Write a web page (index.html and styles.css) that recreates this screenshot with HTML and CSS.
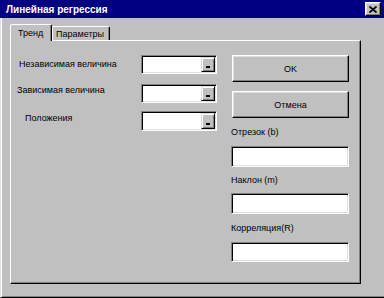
FILE: index.html
```html
<!DOCTYPE html>
<html lang="ru">
<head>
<meta charset="utf-8">
<link rel="stylesheet" href="styles.css">
</head>
<body>
<div class="window">
  <div class="titlebar">
    <span class="title">Линейная регрессия</span>
    <div class="close"><svg width="8" height="7" viewBox="0 0 8 7"><path d="M0.5 0.5 L7.5 6.5 M7.5 0.5 L0.5 6.5" stroke="#000" stroke-width="1.7" fill="none"/></svg></div>
  </div>
  <div class="client">
    <div class="tabs">
      <div class="tab active">Тренд</div>
      <div class="tab">Параметры</div>
    </div>
    <div class="panel">
      <div class="left">
        <div class="row r1"><span class="lbl">Независимая величина</span><div class="combo"><span class="dd"><i></i></span></div></div>
        <div class="row r2"><span class="lbl">Зависимая величина</span><div class="combo"><span class="dd"><i></i></span></div></div>
        <div class="row r3"><span class="lbl">Положения</span><div class="combo"><span class="dd"><i></i></span></div></div>
      </div>
      <div class="right">
        <div class="btn ok">OK</div>
        <div class="btn cancel">Отмена</div>
        <div class="flbl l1">Отрезок (b)</div>
        <div class="field"></div>
        <div class="flbl l2">Наклон (m)</div>
        <div class="field"></div>
        <div class="flbl l3">Корреляция(R)</div>
        <div class="field f3"></div>
      </div>
    </div>
  </div>
</div>
</body>
</html>
```
FILE: styles.css
```css
* { box-sizing: border-box; }
html, body { margin: 0; padding: 0; background: #c0c0c0; }
body { width: 384px; height: 298px; overflow: hidden; font-family: "Liberation Sans", Arial, sans-serif; font-size: 9px; color: #000; }

.window { width: 384px; height: 298px; display: flex; flex-direction: column; background: #c0c0c0; }

.titlebar { height: 18px; background: #000080; display: flex; align-items: center; justify-content: space-between; padding: 0 3px 0 6px; flex: none; }
.title { color: #fff; font-weight: bold; font-size: 10px; }
.close { width: 16px; height: 14px; background: #c0c0c0; border: 1px solid; border-color: #fff #000 #000 #fff; box-shadow: inset -1px -1px #808080, inset 1px 1px #dfdfdf; display: flex; align-items: center; justify-content: center; }
.close svg { display: block; }

.client { flex: 1; border-left: 1px solid #dfdfdf; box-shadow: inset 1px 0 #fff, inset 0 -1px #808080; border-bottom: 1px solid #000; padding: 6px 0 0 9px; display: flex; flex-direction: column; }

.tabs { display: flex; align-items: flex-end; height: 16px; }
.tab { background: #c0c0c0; border: 1px solid; border-bottom: none; border-color: #fff #000 transparent #fff; box-shadow: inset -1px 0 #808080; border-radius: 2px 2px 0 0; height: 14px; padding: 2px 0 0 3px; line-height: 11px; white-space: nowrap; overflow: hidden; }
.tab.active { position: relative; z-index: 1; height: 17px; margin-bottom: -1px; width: 42px; padding: 3px 0 0 7px; }
.tab:not(.active) { width: 58px; }

.panel { width: 351px; height: 244px; border: 1px solid; border-color: #fff #000 #000 #fff; box-shadow: inset -1px -1px #808080; display: grid; grid-template-columns: 206px 118px; column-gap: 14px; padding-top: 14px; align-items: start; }

.left { display: flex; flex-direction: column; }
.row { display: flex; justify-content: space-between; align-items: flex-start; height: 19px; }
.row.r2 { margin-top: 10px; }
.row.r3 { margin-top: 8px; height: 20px; }
.lbl { line-height: 12px; }
.r1 .lbl { padding: 3px 0 0 8px; }
.r2 .lbl { padding: 0 0 0 6px; }
.r3 .lbl { padding: 1px 0 0 14px; }

.combo { width: 76px; height: 100%; background: #fff; border: 1px solid; border-color: #808080 #fff #fff #808080; box-shadow: inset 1px 1px #000, inset -1px -1px #dfdfdf; padding: 1px; display: flex; justify-content: flex-end; }
.dd { width: 14px; height: 100%; background: #c0c0c0; border: 1px solid; border-color: #dfdfdf #000 #000 #dfdfdf; box-shadow: inset 1px 1px #fff, inset -1px -1px #808080; display: flex; align-items: flex-end; justify-content: center; padding-bottom: 3px; }
.dd i { display: block; width: 4px; height: 2px; background: #000; }

.right { display: flex; flex-direction: column; }
.btn { margin-left: 1px; width: 117px; height: 27px; border: 1px solid; border-color: #fff #000 #000 #fff; box-shadow: inset -1px -1px #808080, inset 1px 1px #dfdfdf; display: flex; align-items: center; justify-content: center; }
.btn.cancel { margin-top: 9px; }
.flbl { line-height: 12px; }
.flbl.l1 { height: 28px; padding-top: 8px; }
.flbl.l2 { height: 26px; padding-top: 7px; }
.flbl.l3 { height: 28px; padding-top: 8px; }
.field { height: 21px; background: #fff; border: 1px solid; border-color: #808080 #fff #fff #808080; box-shadow: inset 1px 1px #000, inset -1px -1px #dfdfdf; }
.field.f3 { height: 20px; }
```
